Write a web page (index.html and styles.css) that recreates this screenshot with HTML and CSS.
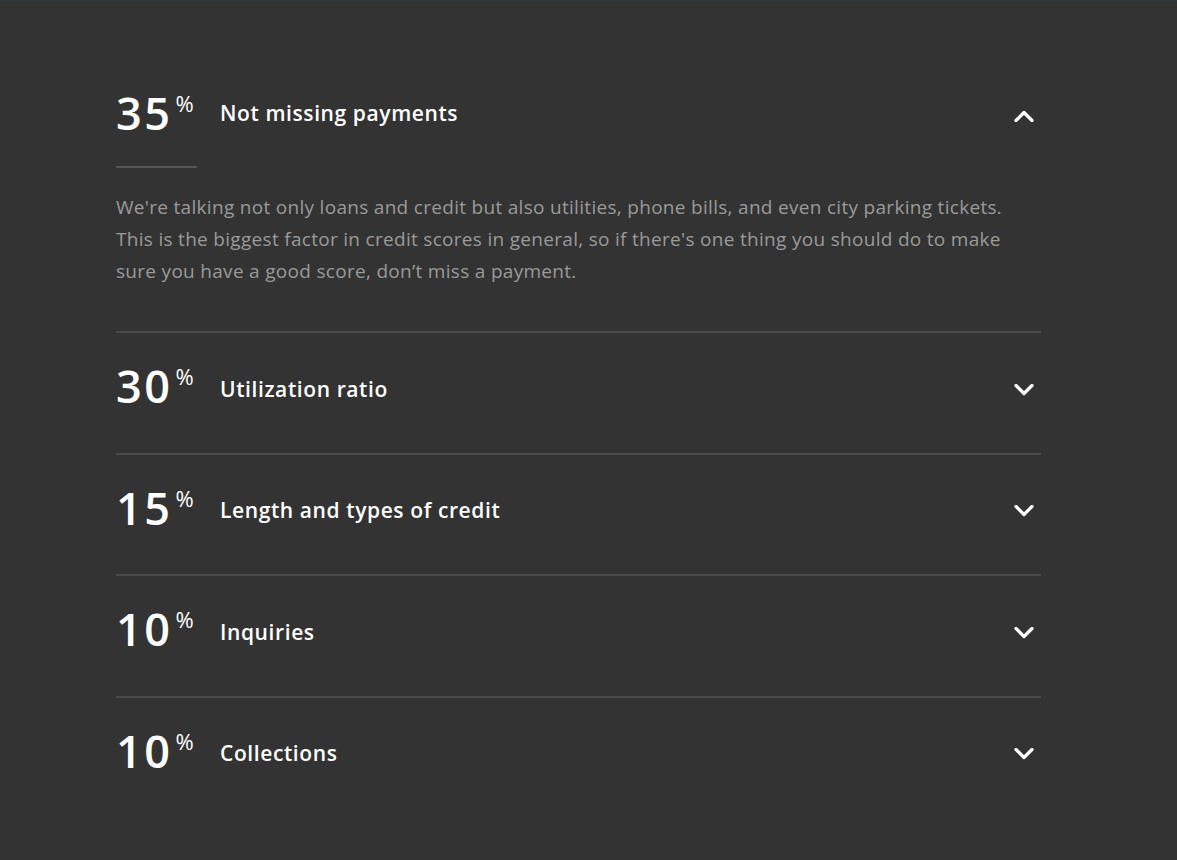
FILE: index.html
```html
<!DOCTYPE html>
<html lang="en">
<head>
    <meta charset="UTF-8">
    <title>What makes up your credit score</title>
    <link rel="stylesheet" href="styles.css">
</head>
<body>
    <div class="factors">
        <div class="factor open">
            <div class="factor-head">
                <div class="pct">35<sup>%</sup></div>
                <div class="title">Not missing payments</div>
                <svg class="chev" width="20" height="12" viewBox="0 0 20 12"><path d="M2 10.5 L10 2.5 L18 10.5" fill="none" stroke="#fff" stroke-width="3.2" stroke-linecap="round" stroke-linejoin="round"/></svg>
            </div>
            <div class="short-rule"></div>
            <p class="desc">We're talking not only loans and credit but also utilities, phone bills, and even city parking tickets.<br>
            This is the biggest factor in credit scores in general, so if there's one thing you should do to make<br>
            sure you have a good score, don’t miss a payment.</p>
        </div>
        <div class="factor">
            <div class="factor-head">
                <div class="pct">30<sup>%</sup></div>
                <div class="title">Utilization ratio</div>
                <svg class="chev" width="20" height="12" viewBox="0 0 20 12"><path d="M2 1.5 L10 9.5 L18 1.5" fill="none" stroke="#fff" stroke-width="3.2" stroke-linecap="round" stroke-linejoin="round"/></svg>
            </div>
        </div>
        <div class="factor">
            <div class="factor-head">
                <div class="pct">15<sup>%</sup></div>
                <div class="title">Length and types of credit</div>
                <svg class="chev" width="20" height="12" viewBox="0 0 20 12"><path d="M2 1.5 L10 9.5 L18 1.5" fill="none" stroke="#fff" stroke-width="3.2" stroke-linecap="round" stroke-linejoin="round"/></svg>
            </div>
        </div>
        <div class="factor">
            <div class="factor-head">
                <div class="pct">10<sup>%</sup></div>
                <div class="title">Inquiries</div>
                <svg class="chev" width="20" height="12" viewBox="0 0 20 12"><path d="M2 1.5 L10 9.5 L18 1.5" fill="none" stroke="#fff" stroke-width="3.2" stroke-linecap="round" stroke-linejoin="round"/></svg>
            </div>
        </div>
        <div class="factor">
            <div class="factor-head">
                <div class="pct">10<sup>%</sup></div>
                <div class="title">Collections</div>
                <svg class="chev" width="20" height="12" viewBox="0 0 20 12"><path d="M2 1.5 L10 9.5 L18 1.5" fill="none" stroke="#fff" stroke-width="3.2" stroke-linecap="round" stroke-linejoin="round"/></svg>
            </div>
        </div>
    </div>
</body>
</html>
```

FILE: styles.css
```css
html, body {
    margin: 0;
    height: 100%;
}
body {
    background-color: #333333;
    border-top: 1px solid #2f3d40;
    box-sizing: border-box;
    font-family: "Open Sans", "Noto Sans", sans-serif;
    color: #fff;
}
.factors {
    width: 925px;
    margin-left: 116px;
    padding-top: 59px;
}
.factor {
    border-bottom: 2px solid #4b4b4b;
}
.factor:last-child {
    border-bottom: none;
}
.factor-head {
    height: 119.5px;
    padding-bottom: 12px;
    box-sizing: border-box;
    display: flex;
    align-items: center;
}
.open .factor-head {
    height: 106px;
    padding-bottom: 0;
}
.pct {
    width: 104px;
    font-size: 45px;
    font-weight: 600;
    letter-spacing: 2.5px;
    line-height: 1;
    position: relative;
    top: -1px;
}
.pct sup {
    font-size: 22px;
    font-weight: 400;
    letter-spacing: 0;
    vertical-align: top;
    position: relative;
    top: 2px;
    margin-left: 3px;
}
.title {
    flex: 1;
    font-size: 21px;
    font-weight: 600;
    letter-spacing: 0.6px;
}
.factor:not(.open) .title {
    margin-top: 4px;
}
.chev {
    margin: 6px 7px 0 0;
}
.short-rule {
    width: 81px;
    height: 2px;
    background-color: #555;
}
.desc {
    margin: 23px 0 0;
    padding-bottom: 44px;
    font-size: 19px;
    line-height: 32px;
    letter-spacing: 0.3px;
    color: #9a9a9a;
}
```
